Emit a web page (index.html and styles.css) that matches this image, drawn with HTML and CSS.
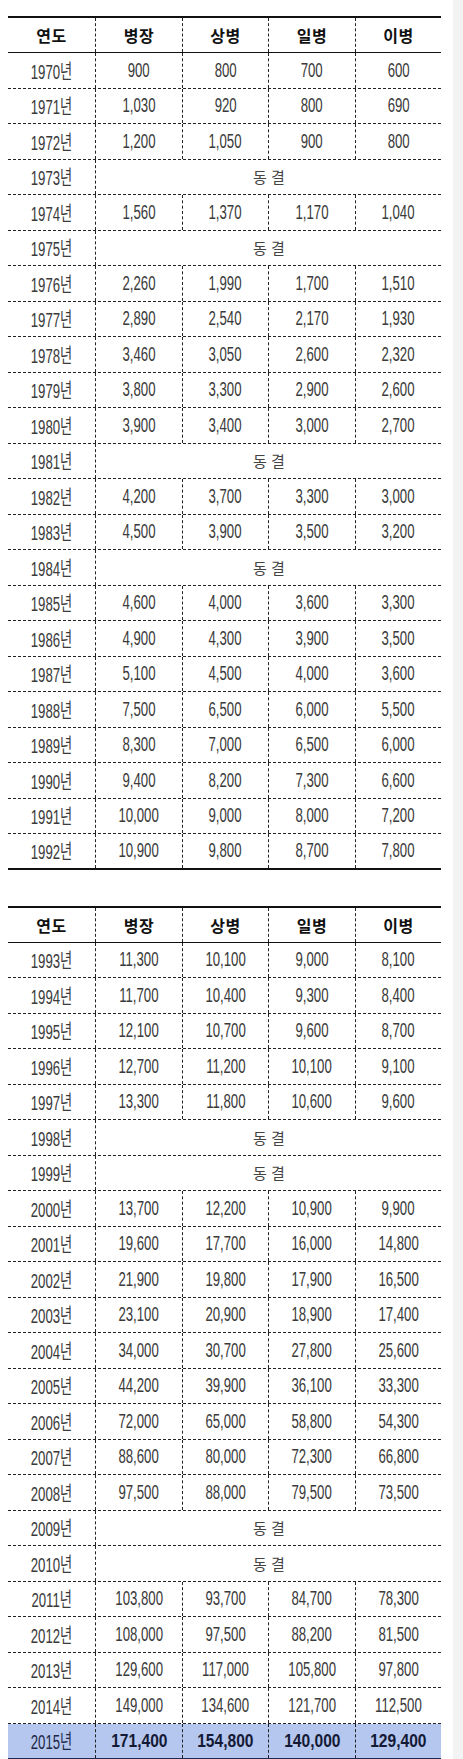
FILE: index.html
```html
<!DOCTYPE html>
<html lang="ko">
<head>
<meta charset="utf-8">
<title>연도별 병사 월급</title>
<link rel="stylesheet" href="styles.css">
</head>
<body>
<div class="page">
  <main class="sheet">
    <section class="tbl">
      <div class="row head"><div class="c">연도</div><div class="c">병장</div><div class="c">상병</div><div class="c">일병</div><div class="c">이병</div></div>
      <div class="row"><div class="c"><span>1970년</span></div><div class="c"><span>900</span></div><div class="c"><span>800</span></div><div class="c"><span>700</span></div><div class="c"><span>600</span></div></div>
      <div class="row"><div class="c"><span>1971년</span></div><div class="c"><span>1,030</span></div><div class="c"><span>920</span></div><div class="c"><span>800</span></div><div class="c"><span>690</span></div></div>
      <div class="row"><div class="c"><span>1972년</span></div><div class="c"><span>1,200</span></div><div class="c"><span>1,050</span></div><div class="c"><span>900</span></div><div class="c"><span>800</span></div></div>
      <div class="row"><div class="c"><span>1973년</span></div><div class="c frz">동 결</div></div>
      <div class="row"><div class="c"><span>1974년</span></div><div class="c"><span>1,560</span></div><div class="c"><span>1,370</span></div><div class="c"><span>1,170</span></div><div class="c"><span>1,040</span></div></div>
      <div class="row"><div class="c"><span>1975년</span></div><div class="c frz">동 결</div></div>
      <div class="row"><div class="c"><span>1976년</span></div><div class="c"><span>2,260</span></div><div class="c"><span>1,990</span></div><div class="c"><span>1,700</span></div><div class="c"><span>1,510</span></div></div>
      <div class="row"><div class="c"><span>1977년</span></div><div class="c"><span>2,890</span></div><div class="c"><span>2,540</span></div><div class="c"><span>2,170</span></div><div class="c"><span>1,930</span></div></div>
      <div class="row"><div class="c"><span>1978년</span></div><div class="c"><span>3,460</span></div><div class="c"><span>3,050</span></div><div class="c"><span>2,600</span></div><div class="c"><span>2,320</span></div></div>
      <div class="row"><div class="c"><span>1979년</span></div><div class="c"><span>3,800</span></div><div class="c"><span>3,300</span></div><div class="c"><span>2,900</span></div><div class="c"><span>2,600</span></div></div>
      <div class="row"><div class="c"><span>1980년</span></div><div class="c"><span>3,900</span></div><div class="c"><span>3,400</span></div><div class="c"><span>3,000</span></div><div class="c"><span>2,700</span></div></div>
      <div class="row"><div class="c"><span>1981년</span></div><div class="c frz">동 결</div></div>
      <div class="row"><div class="c"><span>1982년</span></div><div class="c"><span>4,200</span></div><div class="c"><span>3,700</span></div><div class="c"><span>3,300</span></div><div class="c"><span>3,000</span></div></div>
      <div class="row"><div class="c"><span>1983년</span></div><div class="c"><span>4,500</span></div><div class="c"><span>3,900</span></div><div class="c"><span>3,500</span></div><div class="c"><span>3,200</span></div></div>
      <div class="row"><div class="c"><span>1984년</span></div><div class="c frz">동 결</div></div>
      <div class="row"><div class="c"><span>1985년</span></div><div class="c"><span>4,600</span></div><div class="c"><span>4,000</span></div><div class="c"><span>3,600</span></div><div class="c"><span>3,300</span></div></div>
      <div class="row"><div class="c"><span>1986년</span></div><div class="c"><span>4,900</span></div><div class="c"><span>4,300</span></div><div class="c"><span>3,900</span></div><div class="c"><span>3,500</span></div></div>
      <div class="row"><div class="c"><span>1987년</span></div><div class="c"><span>5,100</span></div><div class="c"><span>4,500</span></div><div class="c"><span>4,000</span></div><div class="c"><span>3,600</span></div></div>
      <div class="row"><div class="c"><span>1988년</span></div><div class="c"><span>7,500</span></div><div class="c"><span>6,500</span></div><div class="c"><span>6,000</span></div><div class="c"><span>5,500</span></div></div>
      <div class="row"><div class="c"><span>1989년</span></div><div class="c"><span>8,300</span></div><div class="c"><span>7,000</span></div><div class="c"><span>6,500</span></div><div class="c"><span>6,000</span></div></div>
      <div class="row"><div class="c"><span>1990년</span></div><div class="c"><span>9,400</span></div><div class="c"><span>8,200</span></div><div class="c"><span>7,300</span></div><div class="c"><span>6,600</span></div></div>
      <div class="row"><div class="c"><span>1991년</span></div><div class="c"><span>10,000</span></div><div class="c"><span>9,000</span></div><div class="c"><span>8,000</span></div><div class="c"><span>7,200</span></div></div>
      <div class="row last"><div class="c"><span>1992년</span></div><div class="c"><span>10,900</span></div><div class="c"><span>9,800</span></div><div class="c"><span>8,700</span></div><div class="c"><span>7,800</span></div></div>
    </section>

    <section class="tbl second">
      <div class="row head"><div class="c">연도</div><div class="c">병장</div><div class="c">상병</div><div class="c">일병</div><div class="c">이병</div></div>
      <div class="row"><div class="c"><span>1993년</span></div><div class="c"><span>11,300</span></div><div class="c"><span>10,100</span></div><div class="c"><span>9,000</span></div><div class="c"><span>8,100</span></div></div>
      <div class="row"><div class="c"><span>1994년</span></div><div class="c"><span>11,700</span></div><div class="c"><span>10,400</span></div><div class="c"><span>9,300</span></div><div class="c"><span>8,400</span></div></div>
      <div class="row"><div class="c"><span>1995년</span></div><div class="c"><span>12,100</span></div><div class="c"><span>10,700</span></div><div class="c"><span>9,600</span></div><div class="c"><span>8,700</span></div></div>
      <div class="row"><div class="c"><span>1996년</span></div><div class="c"><span>12,700</span></div><div class="c"><span>11,200</span></div><div class="c"><span>10,100</span></div><div class="c"><span>9,100</span></div></div>
      <div class="row"><div class="c"><span>1997년</span></div><div class="c"><span>13,300</span></div><div class="c"><span>11,800</span></div><div class="c"><span>10,600</span></div><div class="c"><span>9,600</span></div></div>
      <div class="row"><div class="c"><span>1998년</span></div><div class="c frz">동 결</div></div>
      <div class="row"><div class="c"><span>1999년</span></div><div class="c frz">동 결</div></div>
      <div class="row"><div class="c"><span>2000년</span></div><div class="c"><span>13,700</span></div><div class="c"><span>12,200</span></div><div class="c"><span>10,900</span></div><div class="c"><span>9,900</span></div></div>
      <div class="row"><div class="c"><span>2001년</span></div><div class="c"><span>19,600</span></div><div class="c"><span>17,700</span></div><div class="c"><span>16,000</span></div><div class="c"><span>14,800</span></div></div>
      <div class="row"><div class="c"><span>2002년</span></div><div class="c"><span>21,900</span></div><div class="c"><span>19,800</span></div><div class="c"><span>17,900</span></div><div class="c"><span>16,500</span></div></div>
      <div class="row"><div class="c"><span>2003년</span></div><div class="c"><span>23,100</span></div><div class="c"><span>20,900</span></div><div class="c"><span>18,900</span></div><div class="c"><span>17,400</span></div></div>
      <div class="row"><div class="c"><span>2004년</span></div><div class="c"><span>34,000</span></div><div class="c"><span>30,700</span></div><div class="c"><span>27,800</span></div><div class="c"><span>25,600</span></div></div>
      <div class="row"><div class="c"><span>2005년</span></div><div class="c"><span>44,200</span></div><div class="c"><span>39,900</span></div><div class="c"><span>36,100</span></div><div class="c"><span>33,300</span></div></div>
      <div class="row"><div class="c"><span>2006년</span></div><div class="c"><span>72,000</span></div><div class="c"><span>65,000</span></div><div class="c"><span>58,800</span></div><div class="c"><span>54,300</span></div></div>
      <div class="row"><div class="c"><span>2007년</span></div><div class="c"><span>88,600</span></div><div class="c"><span>80,000</span></div><div class="c"><span>72,300</span></div><div class="c"><span>66,800</span></div></div>
      <div class="row"><div class="c"><span>2008년</span></div><div class="c"><span>97,500</span></div><div class="c"><span>88,000</span></div><div class="c"><span>79,500</span></div><div class="c"><span>73,500</span></div></div>
      <div class="row"><div class="c"><span>2009년</span></div><div class="c frz">동 결</div></div>
      <div class="row"><div class="c"><span>2010년</span></div><div class="c frz">동 결</div></div>
      <div class="row"><div class="c"><span>2011년</span></div><div class="c"><span>103,800</span></div><div class="c"><span>93,700</span></div><div class="c"><span>84,700</span></div><div class="c"><span>78,300</span></div></div>
      <div class="row"><div class="c"><span>2012년</span></div><div class="c"><span>108,000</span></div><div class="c"><span>97,500</span></div><div class="c"><span>88,200</span></div><div class="c"><span>81,500</span></div></div>
      <div class="row"><div class="c"><span>2013년</span></div><div class="c"><span>129,600</span></div><div class="c"><span>117,000</span></div><div class="c"><span>105,800</span></div><div class="c"><span>97,800</span></div></div>
      <div class="row"><div class="c"><span>2014년</span></div><div class="c"><span>149,000</span></div><div class="c"><span>134,600</span></div><div class="c"><span>121,700</span></div><div class="c"><span>112,500</span></div></div>
      <div class="row last hl"><div class="c"><span>2015년</span></div><div class="c big"><span>171,400</span></div><div class="c big"><span>154,800</span></div><div class="c big"><span>140,000</span></div><div class="c big"><span>129,400</span></div></div>
    </section>
  </main>
  <aside class="strip"></aside>
</div>
</body>
</html>
```

FILE: styles.css
```css
html, body {
  margin: 0;
  padding: 0;
  background: #ffffff;
}

.page {
  display: flex;
  width: 463px;
  min-height: 1759px;
  overflow: hidden;
}

.sheet {
  width: 453px;
  flex: none;
  background: #ffffff;
  padding-top: 16px;
}

.strip {
  flex: 1;
  background: #f3f3f3;
}

.tbl {
  width: 433px;
  margin-left: 8px;
  border-top: 2px solid #111;
  font-family: "Liberation Sans", "Noto Sans CJK KR", sans-serif;
}

.tbl.second {
  margin-top: 36px;
}

.row {
  display: grid;
  grid-template-columns: 87px 87px 86px 87px 86px;
  height: 35.5px;
  box-sizing: border-box;
  border-bottom: 1px dashed #222;
}

.row.head {
  height: 35px;
  border-bottom: 1px solid #111;
}

.row.last {
  border-bottom: 2px solid #111;
}

.c {
  display: flex;
  align-items: center;
  justify-content: center;
  border-left: 1px dashed #222;
  color: #3a3a3a;
  font-size: 20px;
  white-space: nowrap;
  overflow: hidden;
}

.c:first-child {
  border-left: none;
}

.c span {
  display: inline-block;
  transform: scaleX(0.66);
}

.head .c {
  font-family: "Noto Sans CJK KR", sans-serif;
  font-weight: 700;
  font-size: 16px;
  color: #111;
  letter-spacing: 0.5px;
}

.c.frz {
  grid-column: 2 / 6;
  font-family: "Noto Sans CJK KR", sans-serif;
  font-size: 15px;
  color: #444;
  padding-left: 1px;
}

.row.hl {
  background: #b5c7ef;
  border-bottom: 2px solid #1e2a52;
  height: 36px;
}

.row.hl .c {
  color: #1f2747;
}

.row.hl .c.big {
  color: #141a36;
}

.row.hl .c.big span {
  font-weight: 700;
  font-size: 19px;
  transform: scaleX(0.82);
}
```
